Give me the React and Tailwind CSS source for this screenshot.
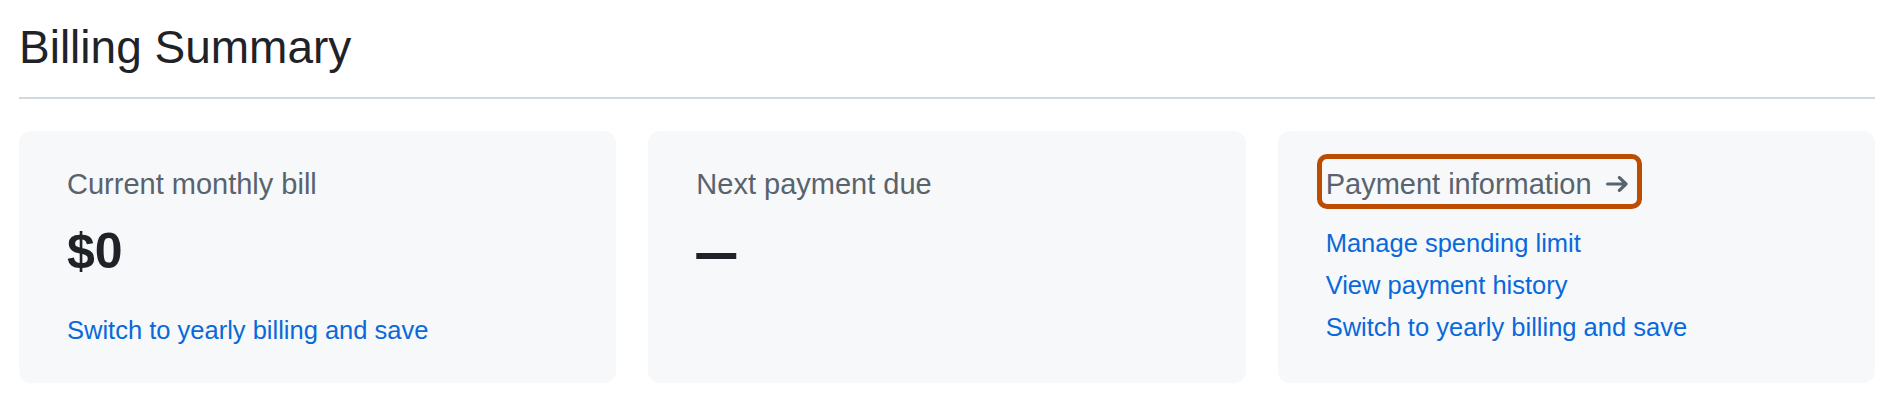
import React from 'react';

function ArrowRight() {
  return (
    <svg width="22" height="16" viewBox="0 0 22 16" fill="none" className="ml-[14px] shrink-0">
      <path
        d="M1.6 8H20M13.4 1.6L20 8L13.4 14.4"
        stroke="#59636e"
        strokeWidth="3.2"
        strokeLinecap="round"
        strokeLinejoin="round"
      />
    </svg>
  );
}

function Card({ children }) {
  return (
    <div className="flex flex-col rounded-[12px] bg-[#f6f8fa] px-[48px] pt-[32px] pb-[35px]">
      {children}
    </div>
  );
}

const links = ['Manage spending limit', 'View payment history', 'Switch to yearly billing and save'];

export default function App() {
  return (
    <div className="min-h-[408px] bg-white pl-[19px] pr-[25px] font-['Liberation_Sans',Arial,sans-serif] text-[#1f2328]">
      <div className="border-b-2 border-[#d1d9e0] pt-[17px] pb-[20px]">
        <h2 className="text-[46px] leading-[60px] font-normal">Billing Summary</h2>
      </div>

      <div className="mt-[32px] grid grid-cols-3 gap-8">
        <Card>
          <div className="text-[29px] leading-[42px] text-[#59636e]">Current monthly bill</div>
          <div className="mt-[16px] text-[50px] leading-[60px] font-bold">$0</div>
          <a href="#" className="mt-auto text-[25.5px] leading-[36px] text-[#0969da]">
            Switch to yearly billing and save
          </a>
        </Card>

        <Card>
          <div className="text-[29px] leading-[42px] text-[#59636e]">Next payment due</div>
          <div className="mt-[16px] text-[40px] leading-[60px] font-bold">
            <span className="inline-block scale-y-150">—</span>
          </div>
        </Card>

        <Card>
          <a href="#" className="relative flex items-center self-start text-[29px] leading-[42px] text-[#59636e]">
            <span>Payment information</span>
            <ArrowRight />
            <span className="pointer-events-none absolute -top-[9px] -bottom-[4px] -left-[9px] -right-[14px] rounded-[10px] border-[5px] border-[#bc4c00]" />
          </a>
          <div className="mt-[17px] flex flex-col items-start">
            {links.map((l) => (
              <a key={l} href="#" className="text-[25.5px] leading-[42px] text-[#0969da]">
                {l}
              </a>
            ))}
          </div>
        </Card>
      </div>
    </div>
  );
}
